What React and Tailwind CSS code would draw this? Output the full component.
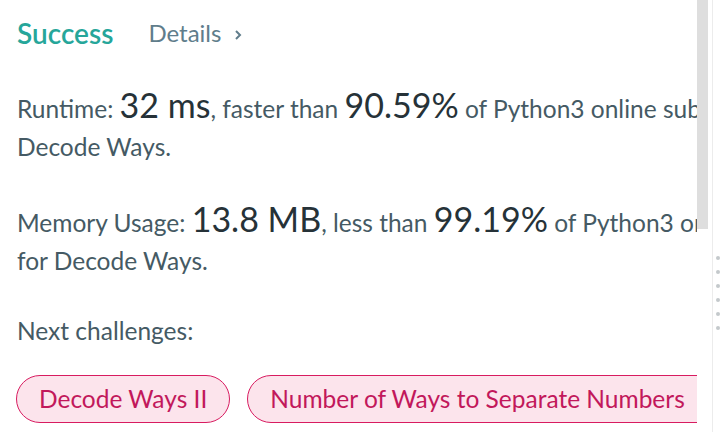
import React from 'react';

const Stat = ({ children }) => (
  <span className="text-[34px] text-[#263238] leading-none">{children}</span>
);

const Chip = ({ children, wide }) => (
  <button
    className={`h-[48px] pl-[22px] ${wide ? 'pr-[40px]' : 'pr-[22px]'} rounded-full border border-[#d81b60] bg-[#fce4ec] text-[#c2185b] text-[24.5px] whitespace-nowrap shrink-0`}
  >
    {children}
  </button>
);

const App = () => {
  return (
    <div className="flex w-[722px] h-[432px] bg-white overflow-hidden" style={{ fontFamily: 'Lato, "Noto Sans", sans-serif' }}>
      {/* result panel */}
      <div className="w-[697px] shrink-0 overflow-hidden pl-[17px] text-[#455a64]">
        <div className="flex items-center h-[66px]">
          <span className="text-[28px] font-semibold text-[#26a69a]">Success</span>
          <span className="ml-[35px] text-[24px] text-[#607d8b]">Details</span>
          <svg className="ml-[12px] mt-[3px]" width="10" height="14" viewBox="0 0 10 14">
            <path d="M3 3 L7 7 L3 11" fill="none" stroke="#607d8b" strokeWidth="2" />
          </svg>
        </div>

        <p className="mt-[22px] text-[24.5px] leading-[38px] whitespace-nowrap">
          Runtime: <Stat>32 ms</Stat>, faster than <Stat>90.59%</Stat> of Python3 online submissions for
          <br />
          Decode Ways.
        </p>

        <p className="mt-[36px] text-[24.5px] leading-[38px] whitespace-nowrap">
          Memory Usage: <Stat>13.8 MB</Stat>, less than <Stat>99.19%</Stat> of Python3 online submissions
          <br />
          for Decode Ways.
        </p>

        <p className="mt-[32px] text-[24.5px] leading-[38px]">Next challenges:</p>

        <div className="flex gap-[17px] mt-[25px] -ml-[1px]">
          <Chip>Decode Ways II</Chip>
          <Chip wide>Number of Ways to Separate Numbers</Chip>
        </div>
      </div>

      {/* scrollbar */}
      <div className="w-[11px] shrink-0">
        <div className="h-[229px] bg-[#dedede]" />
      </div>

      {/* splitter */}
      <div className="w-[4px] shrink-0" />
      <div className="flex-1 border-l border-[#ececec] flex flex-col items-center pt-[256px] gap-[10px]">
        {[0, 1, 2, 3, 4, 5].map((i) => (
          <div key={i} className="w-[4px] h-[4px] rounded-full bg-[#c4c9cc]" />
        ))}
      </div>
    </div>
  );
};

export default App;
